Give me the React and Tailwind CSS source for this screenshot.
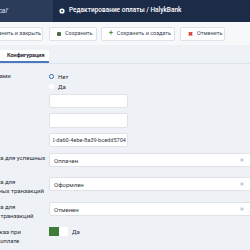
import React from 'react';

function ToolButton({ icon, label, className }) {
    return (
        <div className={`h-[14px] shrink-0 bg-white border border-[#dde2e8] rounded-[2px] flex items-center gap-[4px] pl-[7px] text-[5.5px] text-[#3a4556] ${className}`}>
            {icon}
            <span className="whitespace-nowrap">{label}</span>
        </div>
    );
}

function Label({ lines }) {
    return (
        <div className="w-[49px] shrink-0 overflow-hidden">
            <div className="-ml-[36px] text-[6px] leading-[9px] text-[#2b2f36] whitespace-nowrap">
                {lines.map((l) => <div key={l}>{l}</div>)}
            </div>
        </div>
    );
}

function SelectBox({ value }) {
    return (
        <div className="w-[206px] h-[14px] shrink-0 bg-white border border-[#dfe3e8] rounded-[2px] flex items-center justify-between pl-[4px] pr-[10px] text-[6px] text-[#333a44]">
            <span>{value}</span>
            <svg width="4" height="4" viewBox="0 0 4 4"><rect x="0.5" y="0.5" width="3" height="3" fill="#c9ced5" /></svg>
        </div>
    );
}

export default function App() {
    return (
        <div className="w-[250px] h-[250px] overflow-hidden bg-[#eef1f6] font-[Roboto,sans-serif]">
            {/* top bar */}
            <div className="flex h-[22px]">
                <div className="w-[53px] bg-[#2b3c5a] flex items-center overflow-hidden">
                    <span className="-ml-[3px] text-[7px] italic text-[#d6dce6] tracking-tight">ical'</span>
                </div>
                <div className="flex-1 bg-[#1c2b47] flex items-center pl-[6px] gap-[4px]">
                    <svg width="6" height="6" viewBox="0 0 6 6"><circle cx="3" cy="3" r="2.6" fill="#fff" /><circle cx="3" cy="3" r="0.9" fill="#1c2b47" /></svg>
                    <span className="text-[6.5px] font-medium text-white whitespace-nowrap">Редактирование оплаты / HalykBank</span>
                </div>
            </div>

            {/* toolbar */}
            <div className="h-[23px] bg-[#f7f8fa] flex items-center gap-[5px] -ml-[30px]">
                <ToolButton className="w-[73px]" label="Сохранить и закрыть" icon={<span className="w-[4px] h-[4px] bg-[#6b8a5a] rounded-[1px]" />} />
                <ToolButton className="w-[48px] ml-[1px]" label="Сохранить" icon={<span className="w-[4px] h-[4px] bg-[#4c6b48] rounded-[1px]" />} />
                <ToolButton className="w-[74px] -ml-[1px]" label="Сохранить и создать" icon={<span className="text-[#3e8d3e] text-[7px] font-bold leading-none">+</span>} />
                <ToolButton className="w-[45px]" label="Отменить" icon={<span className="text-[#d23b3b] text-[6px] font-bold leading-none">✖</span>} />
            </div>

            {/* tabs */}
            <div className="mt-[5px] border-b border-[#dde3ea] flex">
                <div className="w-[49px] h-[13px] bg-white border-b-2 border-[#4b79bd] flex items-center pl-[7px] text-[5.5px] font-bold text-[#1f2530]">
                    Конфигурация
                </div>
            </div>

            {/* form */}
            <div className="flex flex-col">
                <div className="flex mt-[7px]">
                    <Label lines={['Работа с чеками']} />
                    <div className="flex flex-col text-[6px] text-[#2b2f36]">
                        <div className="h-[10px] flex items-center gap-[4px]">
                            <span className="w-[5px] h-[5px] rounded-full border-[1.5px] border-[#2c64b3] bg-white" />
                            <span>Нет</span>
                        </div>
                        <div className="h-[10px] flex items-center gap-[4px]">
                            <span className="w-[5px] h-[5px] rounded-full bg-white" />
                            <span>Да</span>
                        </div>
                    </div>
                </div>

                <div className="flex mt-[3px]">
                    <div className="w-[49px] shrink-0" />
                    <div className="w-[79px] h-[14px] bg-white border border-[#dfe3e8] rounded-[2px]" />
                </div>
                <div className="flex mt-[5px]">
                    <div className="w-[49px] shrink-0" />
                    <div className="w-[79px] h-[15px] bg-white border border-[#dfe3e8] rounded-[2px]" />
                </div>
                <div className="flex mt-[5px]">
                    <div className="w-[49px] shrink-0" />
                    <div className="w-[79px] h-[14px] bg-white border border-[#dfe3e8] rounded-[2px] flex items-center pl-[3px] pr-[1px]">
                        <div className="flex-1 overflow-hidden flex justify-end text-[5.6px] text-[#333a44] whitespace-nowrap">
                            c1b2-da60-4ebe-8a39-bcedd5704
                        </div>
                    </div>
                </div>

                <div className="flex items-start h-[14px] mt-[6px]">
                    <Label lines={['Статус заказа для успешных']} />
                    <SelectBox value="Оплачен" />
                </div>
                <div className="flex items-start h-[14px] mt-[10px]">
                    <Label lines={['Статус заказа для', 'незавершенных транзакций']} />
                    <SelectBox value="Оформлен" />
                </div>
                <div className="flex items-start h-[14px] mt-[11px]">
                    <Label lines={['Статус заказа для', 'отмененных транзакций']} />
                    <SelectBox value="Отменен" />
                </div>
                <div className="flex items-start h-[9px] mt-[11px]">
                    <Label lines={['Отменить заказ при', 'неуспешной оплате']} />
                    <div className="flex items-center gap-[4px]">
                        <div className="w-[19px] h-[9px] bg-white flex">
                            <div className="w-[10px] h-full bg-[#3f7c3a]" />
                        </div>
                        <span className="text-[6px] text-[#2b2f36]">Да</span>
                    </div>
                </div>
            </div>
        </div>
    );
}
